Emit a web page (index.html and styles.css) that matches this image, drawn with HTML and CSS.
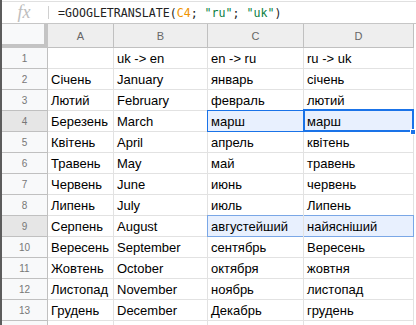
FILE: index.html
```html
<!DOCTYPE html>
<html lang="uk">
<head>
    <meta charset="UTF-8">
    <meta name="viewport" content="width=device-width, initial-scale=1.0">
    <title>GOOGLETRANSLATE</title>
    <link rel="stylesheet" href="styles.css">
</head>
<body>
    <div class="window">
        <div class="formula-bar">
            <div class="fx">fx</div>
            <div class="formula">=GOOGLETRANSLATE(<span class="ref">C4</span>; <span class="str">"ru"</span>; <span class="str">"uk"</span>)</div>
        </div>

        <div class="sheet">
            <div class="corner"></div>
            <div class="col-hd">A</div>
            <div class="col-hd">B</div>
            <div class="col-hd">C</div>
            <div class="col-hd">D</div>

            <div class="row-hd">1</div>
            <div class="cell"></div>
            <div class="cell">uk -&gt; en</div>
            <div class="cell">en -&gt; ru</div>
            <div class="cell">ru -&gt; uk</div>

            <div class="row-hd">2</div>
            <div class="cell">Січень</div>
            <div class="cell">January</div>
            <div class="cell">январь</div>
            <div class="cell">січень</div>

            <div class="row-hd">3</div>
            <div class="cell">Лютий</div>
            <div class="cell">February</div>
            <div class="cell">февраль</div>
            <div class="cell">лютий</div>

            <div class="row-hd active">4</div>
            <div class="cell">Березень</div>
            <div class="cell">March</div>
            <div class="cell sel range-all">марш</div>
            <div class="cell sel current">марш<span class="handle"></span></div>

            <div class="row-hd">5</div>
            <div class="cell">Квітень</div>
            <div class="cell">April</div>
            <div class="cell">апрель</div>
            <div class="cell">квітень</div>

            <div class="row-hd">6</div>
            <div class="cell">Травень</div>
            <div class="cell">May</div>
            <div class="cell">май</div>
            <div class="cell">травень</div>

            <div class="row-hd">7</div>
            <div class="cell">Червень</div>
            <div class="cell">June</div>
            <div class="cell">июнь</div>
            <div class="cell">червень</div>

            <div class="row-hd">8</div>
            <div class="cell">Липень</div>
            <div class="cell">July</div>
            <div class="cell">июль</div>
            <div class="cell">Липень</div>

            <div class="row-hd active">9</div>
            <div class="cell">Серпень</div>
            <div class="cell">August</div>
            <div class="cell sel range-left">августейший</div>
            <div class="cell sel range-right">найясніший</div>

            <div class="row-hd">10</div>
            <div class="cell">Вересень</div>
            <div class="cell">September</div>
            <div class="cell">сентябрь</div>
            <div class="cell">Вересень</div>

            <div class="row-hd">11</div>
            <div class="cell">Жовтень</div>
            <div class="cell">October</div>
            <div class="cell">октября</div>
            <div class="cell">жовтня</div>

            <div class="row-hd">12</div>
            <div class="cell">Листопад</div>
            <div class="cell">November</div>
            <div class="cell">ноябрь</div>
            <div class="cell">листопад</div>

            <div class="row-hd">13</div>
            <div class="cell">Грудень</div>
            <div class="cell">December</div>
            <div class="cell">Декабрь</div>
            <div class="cell">грудень</div>

            <!-- next row is only partly visible at the bottom edge -->
            <div class="row-hd"></div>
            <div class="cell"></div>
            <div class="cell"></div>
            <div class="cell"></div>
            <div class="cell"></div>
        </div>
    </div>
</body>
</html>
```

FILE: styles.css
```css
* {
    margin: 0;
    padding: 0;
    box-sizing: border-box;
}

body {
    font-family: 'Liberation Sans', Arial, sans-serif;
    background-color: #fff;
    color: #000;
    overflow: hidden;
}

.window {
    border-left: 2px solid #5c5c5c;
    height: 325px;
    overflow: hidden;
}

/* formula bar */
.formula-bar {
    display: flex;
    align-items: center;
    height: 23px;
    margin-top: 1px;
    border-top: 1px solid #e0e0e0;
    border-bottom: 1px solid #c6c6c6;
}

.fx {
    width: 47px;
    height: 13px;
    border-right: 1px solid #d0d0d0;
    font-family: 'Liberation Serif', serif;
    font-style: italic;
    font-size: 18px;
    line-height: 13px;
    color: #bdbdbd;
    text-align: center;
    padding-right: 2px;
}

.formula {
    padding-left: 9px;
    font-family: 'DejaVu Sans Mono', monospace;
    font-size: 11.6px;
    color: #222;
    white-space: nowrap;
}

.formula .ref {
    color: #f09300;
}

.formula .str {
    color: #0b8043;
}

/* grid */
.sheet {
    display: grid;
    grid-template-columns: 46px 66px 94px 96px 110px;
    grid-auto-rows: 21px;
    grid-template-rows: 24px;
}

.corner {
    background: #f8f9fa;
    border-right: 4px solid #c4c4c4;
    border-bottom: 4px solid #c4c4c4;
}

.col-hd {
    background: #eeeeee;
    border-right: 1px solid #c0c0c0;
    border-bottom: 1px solid #c0c0c0;
    color: #666;
    font-size: 11px;
    display: flex;
    align-items: center;
    justify-content: center;
}

.row-hd {
    background: #f8f9fa;
    border-right: 1px solid #c0c0c0;
    border-bottom: 1px solid #c0c0c0;
    color: #777;
    font-size: 10px;
    display: flex;
    align-items: center;
    justify-content: center;
    padding-top: 1px;
}

.row-hd.active {
    background: #e6e6e6;
}

.cell {
    position: relative;
    border-right: 1px solid #e2e2e2;
    border-bottom: 1px solid #e2e2e2;
    font-size: 13px;
    line-height: 15px;
    padding: 0 3px 2px 3px;
    display: flex;
    align-items: flex-end;
    white-space: nowrap;
}

/* selections */
.sel {
    background: #e8f0fe;
}

.sel::after {
    content: '';
    position: absolute;
    top: -1px;
    left: -1px;
    right: -1px;
    bottom: -1px;
    border: 1px solid #1a73e8;
    pointer-events: none;
}

.sel.range-left::after {
    border-color: #7aa7e6;
    border-right: none;
    right: 0;
}

.sel.range-right::after {
    border-color: #7aa7e6;
    border-left: none;
    left: 0;
}

.sel.current::after {
    border: 2px solid #1a73e8;
    top: -2px;
    left: -1px;
    right: -1px;
    bottom: -1px;
}

.handle {
    position: absolute;
    right: -3px;
    bottom: -4px;
    width: 6px;
    height: 6px;
    background: #1a73e8;
    border: 1px solid #fff;
    z-index: 2;
}
```
